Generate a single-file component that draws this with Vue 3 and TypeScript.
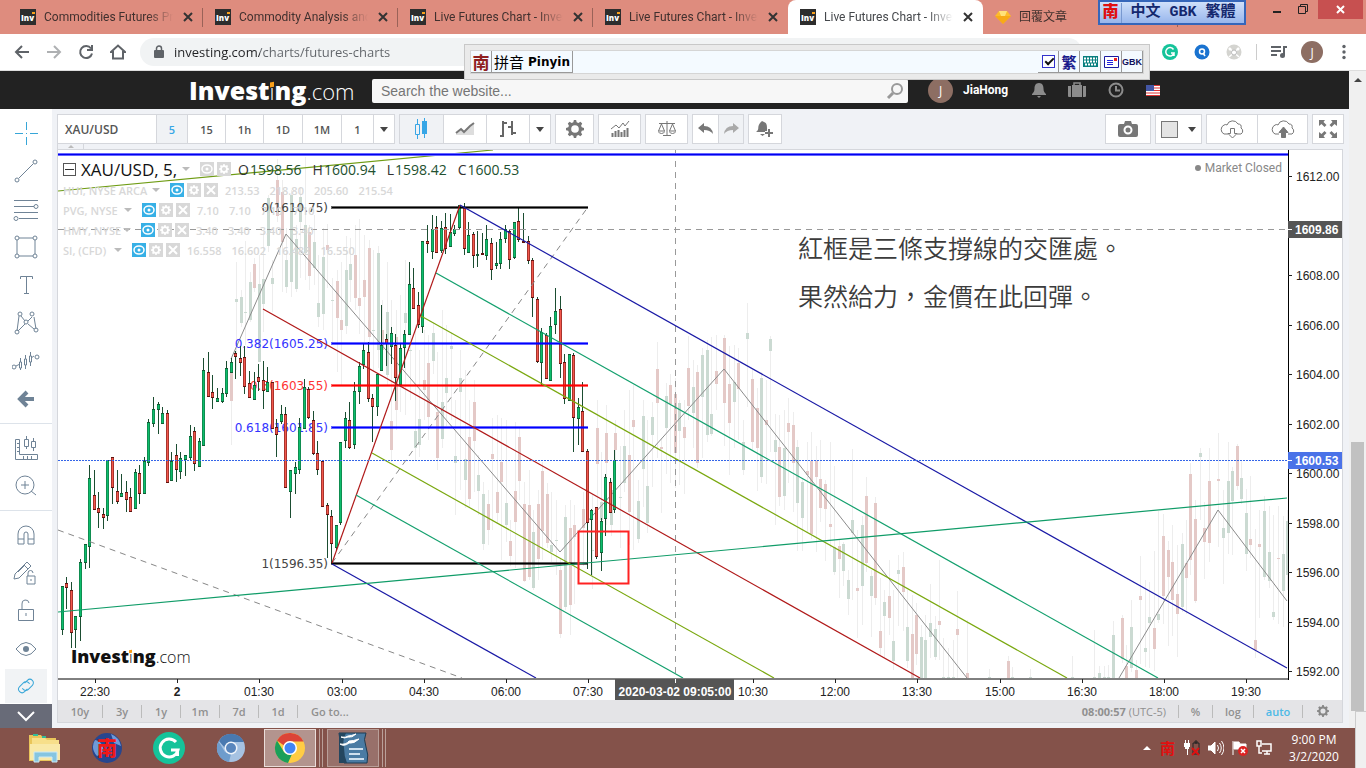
<script setup lang="ts">
type Candle = [hi: number, top: number, bottom: number, lo: number, up: 0 | 1]
type Ghost = [x: number, hi: number, top: number, bottom: number, lo: number, up: 0 | 1]

const tabs = [
  { title: 'Commodities Futures Pri', active: false },
  { title: 'Commodity Analysis and', active: false },
  { title: 'Live Futures Chart - Inves', active: false },
  { title: 'Live Futures Chart - Inves', active: false },
  { title: 'Live Futures Chart - Inves', active: true },
]

const intervals = [
  { label: '15', width: 38 },
  { label: '1h', width: 38 },
  { label: '1D', width: 39 },
  { label: '1M', width: 39 },
  { label: '1', width: 32 },
]

const indicators = [
  { name: 'HUI, NYSE ARCA', width: 85, values: ['213.53', '218.80', '205.60', '215.54'] },
  { name: 'PVG, NYSE', width: 57, values: ['7.10', '7.10', '7.10', '7.10'] },
  { name: 'HMY, NYSE', width: 56, values: ['3.40', '3.40', '3.40', '3.40'] },
  { name: 'SI, (CFD)', width: 47, values: ['16.558', '16.602', '16.488', '16.550'] },
]

const quotes = [['O', '1598.56'], ['H', '1600.94'], ['L', '1598.42'], ['C', '1600.53']]
const ranges = ['10y', '3y', '1y', '1m', '7d', '1d']

const candles: Candle[] = [
  [586,586,629,634,1],[577,583,587,608,0],[582,590,632,647,0],[616,616,629,647,1],[559,562,616,640,1],
  [544,544,562,568,1],[465,478,546,567,1],[470,495,509,509,0],[492,508,512,527,0],[508,514,517,528,0],
  [460,460,515,520,1],[457,457,487,503,0],[470,491,501,503,0],[474,493,496,496,1],[481,492,499,511,0],
  [488,497,511,511,0],[469,472,508,508,1],[465,473,493,503,0],[457,461,493,493,1],[419,422,462,465,1],
  [397,409,423,426,1],[402,404,409,433,1],[407,413,423,423,1],[410,413,482,482,0],[452,461,480,480,1],
  [444,455,469,481,0],[452,458,471,478,1],[455,455,459,475,1],[425,436,457,460,1],[427,431,463,470,0],
  [438,441,466,466,1],[358,370,445,445,1],[352,372,396,396,0],[375,392,397,408,0],[388,398,401,401,1],
  [388,393,401,402,1],[361,368,393,396,1],[358,362,372,372,1],[351,353,356,378,0],[346,358,362,375,0],
  [346,357,386,393,0],[371,383,397,397,0],[372,385,399,399,1],[364,377,381,390,0],[361,380,390,408,0],
  [367,382,391,391,1],[382,382,428,428,0],[419,427,434,456,0],[405,414,421,423,1],[407,414,487,487,0],
  [470,470,491,517,1],[462,467,473,493,1],[418,427,469,473,1],[379,387,428,428,1],[387,389,417,418,0],
  [411,420,453,454,0],[441,453,469,474,0],[461,461,506,506,0],[503,505,514,557,0],[510,516,543,563,0],
  [525,525,547,550,1],[442,442,522,524,1],[412,418,440,447,1],[402,420,447,448,0],[382,391,444,448,1],
  [362,366,391,403,1],[343,350,364,368,1],[342,352,398,401,0],[394,398,406,441,0],[374,374,406,415,1],
  [305,345,370,370,1],[334,339,343,365,0],[327,333,346,363,1],[334,345,377,400,0],[344,348,384,384,1],
  [330,334,347,367,1],[262,284,334,334,1],[268,288,308,308,0],[292,305,324,327,0],[241,241,326,332,1],
  [225,241,243,252,0],[215,229,251,258,1],[216,227,252,252,0],[221,228,250,252,1],[213,227,248,253,0],
  [214,232,246,246,1],[225,229,233,235,1],[205,205,227,229,1],[203,207,248,254,0],[222,235,252,252,1],
  [232,234,255,267,0],[231,254,255,266,1],[233,253,254,254,0],[225,239,255,259,1],[238,243,269,279,0],
  [242,263,265,268,1],[232,239,263,268,1],[225,229,238,242,1],[230,231,259,268,0],[222,222,257,258,1],
  [208,221,239,241,0],[213,241,242,242,0],[236,241,260,263,0],[258,260,297,316,0],[297,299,361,362,0],
  [328,332,362,385,1],[333,335,378,378,0],[317,326,380,380,1],[288,311,324,333,1],[296,309,363,377,0],
  [354,362,398,403,0],[354,354,400,400,1],[353,355,417,451,0],[398,407,418,444,1],[382,411,451,451,0],
  [449,451,522,568,0],[509,510,519,574,1],[507,507,556,558,0],[518,521,552,570,1],[474,477,518,535,1],
  [478,482,512,512,0],[450,460,509,512,1],
]

const ghosts: Ghost[] = [
  [231,360,368,401,445,0],[236,262,299,302,370,1],[241,290,297,323,327,1],[245,241,312,313,345,1],[250,272,282,320,322,1],
  [254,258,264,288,292,0],[259,255,284,362,362,1],[263,232,279,304,332,1],[268,195,198,246,252,1],[272,260,278,284,312,1],
  [277,159,180,216,222,0],[282,180,192,242,292,0],[286,228,260,287,293,1],[291,190,195,282,297,1],[296,225,239,289,292,1],
  [300,187,197,222,278,1],[305,157,225,253,280,1],[309,225,232,276,290,0],[314,215,242,268,285,1],[318,255,303,317,327,1],
  [323,228,257,314,330,1],[327,224,245,250,288,0],[332,278,300,301,345,1],[337,270,281,318,372,0],[341,262,320,330,386,0],
  [346,236,270,326,334,1],[350,238,264,280,302,1],[355,225,255,298,310,0],[359,219,298,306,334,0],[364,235,280,297,342,0],
  [369,240,248,337,352,0],[373,250,330,331,371,1],[378,246,253,350,368,1],[382,300,330,350,364,0],[387,262,312,375,386,1],
  [391,300,421,450,462,0],[396,310,337,410,430,0],[400,295,350,380,412,1],[405,260,313,323,415,1],[410,278,350,351,400,1],
  [415,325,431,448,460,1],[419,350,419,445,457,1],[424,330,380,390,420,0],[428,335,363,417,440,0],[433,322,333,361,374,1],
  [437,352,412,458,470,0],[442,310,402,439,448,1],[446,325,378,393,426,1],[451,332,346,349,420,1],[455,400,456,463,515,1],
  [460,350,378,392,490,1],[465,370,459,480,508,1],[469,400,437,499,508,0],[474,380,402,441,492,0],[478,455,475,491,515,1],
  [483,482,494,544,550,1],[488,490,504,530,545,0],[492,418,454,459,530,0],[497,415,492,513,523,0],[501,418,462,482,560,0],
  [506,420,503,525,542,1],[510,520,541,556,566,0],[515,422,491,522,568,0],[519,428,437,481,500,0],[524,482,504,581,582,0],
  [529,470,505,577,580,0],[533,510,532,588,590,1],[538,490,504,559,580,0],[542,462,471,531,560,0],[547,483,494,543,548,0],
  [551,492,545,552,562,1],[556,500,540,541,575,1],[560,558,570,634,638,0],[565,505,517,607,610,1],[570,500,528,605,635,0],
  [574,505,525,537,604,0],[583,492,509,528,566,0],[592,495,550,551,589,1],[597,400,428,464,545,0],[601,452,502,520,540,1],
  [606,405,433,463,525,0],[611,480,490,525,536,1],[615,420,433,450,470,0],[620,446,497,498,548,1],[624,410,446,483,492,1],
  [629,390,455,512,545,0],[633,385,420,427,550,0],[638,480,501,539,543,1],[643,400,416,469,507,1],[647,420,486,523,533,1],
  [652,402,417,435,487,1],[657,342,369,403,458,0],[661,438,447,449,513,0],[666,383,396,428,474,1],[670,374,385,404,483,0],
  [675,378,394,453,488,0],[679,400,403,431,485,1],[684,400,427,438,494,0],[688,336,368,406,420,0],[693,360,387,413,448,1],
  [697,365,372,463,468,0],[702,348,355,397,458,1],[707,340,350,435,442,1],[711,337,414,434,436,1],[716,335,371,384,410,0],
  [724,335,338,403,446,0],[729,346,384,423,475,0],[734,345,382,402,448,1],[738,348,363,389,440,0],[743,420,442,470,475,1],
  [747,303,333,339,407,1],[752,368,379,442,450,0],[757,388,408,448,491,0],[761,372,378,477,483,1],[766,380,420,425,484,0],
  [770,336,339,351,452,1],[775,414,440,452,525,1],[779,415,447,497,506,0],[784,410,448,496,510,1],[788,398,423,432,483,0],
  [793,412,425,463,512,0],[797,440,447,503,551,1],[802,478,482,518,551,1],[807,442,471,475,533,0],[811,432,461,534,539,0],
  [816,446,461,477,552,0],[820,440,479,508,522,0],[825,480,484,509,561,0],[830,442,524,527,548,0],[834,466,547,572,575,1],
  [839,540,546,559,598,0],[843,542,544,571,586,1],[848,570,580,599,615,1],[852,449,520,533,600,1],[857,530,588,591,638,0],
  [862,516,525,586,625,1],[866,477,496,563,572,0],[871,570,576,596,637,1],[875,497,503,598,605,0],[880,578,631,648,655,0],
  [884,590,602,616,658,1],[889,560,596,618,635,0],[893,590,641,661,670,1],[898,555,570,574,626,1],[903,552,567,592,631,0],
  [907,590,627,661,668,1],[912,595,634,678,678,0],[916,603,615,654,665,0],[921,625,637,678,678,1],[925,615,640,678,678,1],
  [930,584,623,637,658,1],[935,616,629,657,660,1],[939,560,621,625,660,0],[943,638,677,678,678,1],[948,648,677,678,678,1],
  [953,640,677,678,678,1],[957,591,629,635,678,0],[967,620,673,678,678,0],[989,669,677,678,678,1],[1008,656,661,678,678,0],
  [1012,667,677,678,678,1],[1030,669,677,678,678,1],[1072,656,677,678,678,1],[1094,630,677,678,678,1],[1099,666,673,678,678,1],
  [1104,666,677,678,678,1],[1108,665,677,678,678,1],[1113,621,635,678,678,1],[1122,615,618,659,663,0],[1126,645,666,678,678,0],
  [1131,600,627,668,672,1],[1136,660,670,678,678,0],[1140,556,596,600,664,0],[1145,580,648,652,667,1],[1149,582,617,623,668,1],
  [1154,551,628,649,671,0],[1158,511,614,620,623,1],[1163,514,536,596,624,0],[1168,541,550,577,646,0],[1172,525,562,600,636,0],
  [1177,545,594,614,657,0],[1182,533,544,607,612,1],[1186,520,563,578,614,0],[1190,463,474,560,575,0],[1195,500,519,601,603,0],
  [1200,448,453,457,520,1],[1204,502,528,542,579,0],[1209,448,481,543,562,0],[1218,433,479,481,547,0],[1223,490,528,538,584,1],
  [1228,442,481,533,554,1],[1232,467,471,501,555,1],[1237,444,446,486,490,0],[1241,460,478,499,504,1],[1246,489,513,554,571,1],
  [1250,476,539,545,558,0],[1255,529,640,650,658,0],[1259,510,544,547,618,0],[1264,496,511,577,580,1],[1269,506,552,581,588,1],
  [1273,515,612,617,620,1],[1278,506,558,559,624,0],[1283,516,554,591,627,1],[1287,510,521,575,590,1],
]

// Five-minute bars sit about 4.567px apart, snapped to whole pixels.
const barX = (i: number) => Math.floor(62.2 + 4.567 * i)

const trendLines = [
  { c: '#6f9c14', p: [58, 191, 493, 150] },
  { c: '#b01919', p: [332, 563, 460, 205] },
  { c: '#1a1aa6', p: [460, 205, 1287, 668] },
  { c: '#14a06e', p: [436, 273, 1158, 678] },
  { c: '#7aa80f', p: [421, 316, 1067, 678] },
  { c: '#b01919', p: [263, 309, 920, 678] },
  { c: '#7aa80f', p: [372, 453, 774, 678] },
  { c: '#14a06e', p: [356, 495, 683, 678] },
  { c: '#1a1aa6', p: [332, 564, 536, 678] },
  { c: '#109c68', p: [58, 612, 1287, 498] },
]

const fibs = [
  { y: 207, c: '#000', tc: '#444', t: '0(1610.75)' },
  { y: 343, c: '#00f', tc: '#33f', t: '0.382(1605.25)' },
  { y: 385, c: '#f00', tc: '#f33', t: '0.5(1603.55)' },
  { y: 427, c: '#00f', tc: '#33f', t: '0.618(1601.85)' },
  { y: 563, c: '#000', tc: '#444', t: '1(1596.35)' },
]

const prices = [1612, 1608, 1606, 1604, 1602, 1600, 1598, 1596, 1594, 1592]
const priceY = (p: number) => Math.round(176 + (1612 - p) * 24.75)
const times = [
  [95, '22:30'], [177, '2'], [259, '01:30'], [342, '03:00'], [424, '04:30'], [506, '06:00'], [588, '07:30'],
  [753, '10:30'], [835, '12:00'], [917, '13:30'], [1000, '15:00'], [1082, '16:30'], [1164, '18:00'], [1246, '19:30'],
] as [number, string][]

const gear = 'M7 0h2l.5 2 1.500.6L12.800 1.600l1.600 1.600-1 1.800.6 1.500 2 .5v2l-2 .5-.6 1.500 1 1.800-1.600 1.600-1.800-1-1.500.6-.5 2H7l-.5-2-1.500-.6-1.800 1-1.600-1.600 1-1.800L2 9.500 0 9V7l2-.5.6-1.500-1-1.800 1.600-1.600 1.800 1L6.500 2zM8 4.600a3.400 3.400 0 1 0 0 6.800 3.400 3.400 0 0 0 0-6.800z'

const circle = (x: number, y: number) => `M${x - 2} ${y}a2 2 0 1 0 4 0a2 2 0 1 0 -4 0`
const tools = [
  [
    { name: 'Trend line', d: `M7 21L21 7${circle(5, 23)}${circle(23, 5)}` },
    { name: 'Fibonacci', d: `M2 5.500h24M2 11.500h20M2 17.500h24M7 23.500h19${circle(24, 11.5)}${circle(4, 23.5)}` },
    { name: 'Shapes', d: `M7 5h14M7 23h14M5 7v14M23 7v14${circle(5, 5)}${circle(23, 5)}${circle(5, 23)}${circle(23, 23)}` },
    { name: 'Text', d: 'M8.500 8V5.500h12V8M14.500 5v18M12 22.500h5' },
    { name: 'Patterns', d: `M7 7L5 22M9 7l4 5M16 12l4-4M6 22l7-7M16 15l6 5M22 8l2 12${circle(8, 5)}${circle(20, 5)}${circle(14, 13)}${circle(5, 23)}${circle(24, 21)}` },
    { name: 'Prediction', d: `M4 19l4-2M22 9l-3 2${circle(2, 20)}${circle(25, 10)}M7.500 15h2v6h-2zM8.500 11v4M8.500 21v2M12.500 12h2v6h-2zM13.500 8v4M13.500 18v4M17.500 9h2v6h-2zM18.500 5v4M18.500 15v4` },
  ],
  [
    { name: 'Measure', d: 'M3.500 5.500h4v15h18v5h-22zM5 9.500h3M5 13.500h3M5 17.500h3M11.500 22v3M15.500 22v3M19.500 22v3M12.500 5.500h4v7h-4zM14.500 2v4M14.500 12v3M19.500 7.500h4v6h-4zM21.500 4v4M21.500 14v3' },
    { name: 'Zoom in', d: 'M4 13a9 9 0 1 0 18 0a9 9 0 1 0 -18 0M19 19l5 4M9 13h8M13 9v8' },
  ],
  [
    { name: 'Magnet', d: 'M6 23V13a8 8 0 0 1 16 0v10h-6V13a2 2 0 0 0-4 0v10zM6 18h6M16 18h6' },
    { name: 'Lock drawing tools', d: 'M3 15L15 3l4 4L7 19l-5 1zM12 6l4 4M6 13l7-7M15 17h8v8h-8zM16 17v-3a2.500 2.500 0 0 1 5 0M19 20v2' },
    { name: 'Unlock', d: 'M6.500 12.500h15v11h-15zM10 12V7a3.500 3.500 0 0 1 7-1M14 16v3' },
    { name: 'Hide drawings', d: 'M4 14q10-13 20 0q-10 13-20 0' },
  ],
]
</script>

<template>
  <div class="desktop">
    <header class="tabstrip">
      <nav class="tabs">
        <div v-for="(tab, i) in tabs" :key="i" class="tab" :class="{ active: tab.active, lead: i === 3 }">
          <span class="favicon">Inv<i></i></span>
          <a href="#" class="tab-title">{{ tab.title }}</a>
          <button class="tab-close" aria-label="Close tab">
            <svg width="10" height="10"><path d="M1 1l8 8M9 1l-8 8" stroke="currentColor" stroke-width="2" /></svg>
          </button>
        </div>
        <div class="tab last">
          <svg width="16" height="16"><path d="M4 2h8l4 5-8 8-8-8z" fill="#fdbb2c" /><path d="M4 2h8l-2 5H6z" fill="#ffe27a" /><path d="M0 7h16l-8 8z" fill="#f59f0a" opacity=".6" /></svg>
          <a href="#" class="tab-title">回覆文章</a>
        </div>
      </nav>
      <div class="window-buttons">
        <button aria-label="Minimize"><svg width="25" height="19"><path d="M8 12h8" stroke="#222" stroke-width="2" /></svg></button>
        <button aria-label="Restore"><svg width="28" height="19"><path d="M8.500 6.500h7v7h-7zM10.500 6V4.500h7v7H16" fill="none" stroke="#222" /></svg></button>
        <button class="win-close" aria-label="Close"><svg width="45" height="19"><path d="M19 6l7 7M26 6l-7 7" stroke="#fff" stroke-width="2" /></svg></button>
      </div>
      <div class="ime-badge"><b>南</b><span>中文 GBK 繁體</span></div>
    </header>

    <div class="addressbar">
      <button aria-label="Back"><svg width="16" height="16"><path d="M15 8H2M8 2L2 8l6 6" class="nav" /></svg></button>
      <button aria-label="Forward" class="dim"><svg width="16" height="16"><path d="M1 8h13M8 2l6 6-6 6" class="nav" /></svg></button>
      <button aria-label="Reload"><svg width="16" height="16"><path d="M13 4.500A6 6 0 1 0 14 9.500M14 1v5H9" class="nav" /></svg></button>
      <button aria-label="Home"><svg width="16" height="16"><path d="M1 8l7-6.500L15 8h-2v6.500H3V8z" class="nav" /></svg></button>
      <div class="omnibox">
        <svg width="10" height="14"><path d="M1 5h8a1 1 0 0 1 1 1v6a1 1 0 0 1-1 1H1a1 1 0 0 1-1-1V6a1 1 0 0 1 1-1z" fill="#5f6368" /><path d="M2.500 6V3.500a2.500 2.500 0 0 1 5 0V6" fill="none" stroke="#5f6368" stroke-width="1.500" /></svg>
        <input aria-label="Address" value="investing.com/charts/futures-charts" />
      </div>
      <div class="extensions">
        <svg width="16" height="16"><circle cx="8" cy="8" r="8" fill="#15c39a" /><path d="M11.500 5.500A4.200 4.200 0 1 0 12 9H9M12 9v3" fill="none" stroke="#fff" stroke-width="1.500" /></svg>
        <svg width="16" height="16"><circle cx="8" cy="8" r="7.500" fill="#1a73d0" /><circle cx="8" cy="7.500" r="2.500" fill="none" stroke="#fff" stroke-width="1.500" /><path d="M9 9l2 3" stroke="#fff" stroke-width="1.500" /></svg>
        <svg width="16" height="16"><circle cx="8" cy="8" r="7.500" fill="#d4d4d0" /><path d="M3 4l10 9M13 4L3 13" stroke="#fff" stroke-width="1.500" /><circle cx="8" cy="8.500" r="2.500" fill="#fff" stroke="#bbb" /><circle cx="4" cy="5" r="1.500" fill="#fff" /><circle cx="12" cy="5" r="1.500" fill="#fff" /></svg>
        <i class="rule"></i>
        <svg width="16" height="16" viewBox="0 0 16 14"><path d="M0 2h10M0 6h10M0 10h6M13 1v9M12.500 2H16" stroke="#5f6368" stroke-width="2" /><circle cx="11.500" cy="10.500" r="2.500" fill="#5f6368" /></svg>
        <span class="avatar">J</span>
        <svg width="4" height="16" fill="#5f6368"><circle cx="2" cy="2.500" r="1.700" /><circle cx="2" cy="8" r="1.700" /><circle cx="2" cy="13.500" r="1.700" /></svg>
      </div>
    </div>

    <div class="viewport">
      <main class="page">
        <header class="site-header">
          <a href="#" class="logo"><b>Invest<span class="dot-i">i</span>ng</b><span>.com</span></a>
          <div class="search">
            <input aria-label="Search the website" placeholder="Search the website..." />
            <svg width="18" height="18"><circle cx="11" cy="7" r="5" fill="none" stroke="#999" stroke-width="2" /><path d="M7 11l-5 5" stroke="#999" stroke-width="3" /></svg>
          </div>
          <div class="account">
            <span class="avatar">J</span>
            <a href="#" class="user">JiaHong</a>
            <svg width="14" height="16" fill="#8c8c8c"><path d="M7 1c3.500 0 4.500 3 4.500 5.500 0 3 1 4 2.500 5.500v1H0v-1c1.500-1.500 2.500-2.500 2.500-5.500C2.500 4 3.500 1 7 1zM5 14h4l-2 2z" /></svg>
            <svg width="18" height="16" fill="#8c8c8c"><path d="M4 3h10v12H4zM0 4h3v11H1a1 1 0 0 1-1-1zM15 4h3v10a1 1 0 0 1-1 1h-2z" /><path d="M6 3V1h6v2" fill="none" stroke="#8c8c8c" stroke-width="1.500" /></svg>
            <svg width="16" height="16" fill="none" stroke="#8c8c8c" stroke-width="2"><circle cx="8" cy="8" r="6.500" /><path d="M8 4v4.500h4" /></svg>
            <svg width="14" height="11"><path fill="#fff" d="M0 0h14v11H0z" /><path d="M0 .5h14M0 3h14M0 5.500h14M0 8h14M0 10.500h14" stroke="#d33" stroke-width="1.200" /><path fill="#4457a5" d="M0 0h8v6H0z" /></svg>
          </div>
        </header>

        <div class="workspace">
          <aside class="tools">
            <button class="tool" aria-label="Crosshair"><svg width="28" height="28"><path d="M14.500 3v8M14.500 18v8M3 14.500h8M18 14.500h8M14 14.500h1" style="stroke: #37a6d8" /></svg></button>
            <button v-for="t in tools[0]" :key="t.name" class="tool" :aria-label="t.name"><svg width="28" height="28"><path :d="t.d" /></svg></button>
            <button class="tool" aria-label="Back"><svg width="28" height="28"><path d="M22 14H9M15 7l-7 7 7 7" class="bold" /></svg></button>
            <i class="split"></i>
            <button v-for="t in tools[1]" :key="t.name" class="tool" :aria-label="t.name"><svg width="28" height="28"><path :d="t.d" /></svg></button>
            <i class="split"></i>
            <button v-for="t in tools[2]" :key="t.name" class="tool" :aria-label="t.name"><svg width="28" height="28"><path :d="t.d" /><circle v-if="t.name === 'Hide drawings'" cx="14" cy="14" r="3" fill="#6f8396" /></svg></button>
            <button class="tool linked" aria-label="Link"><svg width="28" height="28"><g transform="rotate(-45 14 14)"><path d="M13 17H9a3.500 3.500 0 0 1 0-7h6a3.500 3.500 0 0 1 3 5M15 11h4a3.500 3.500 0 0 1 0 7h-6a3.500 3.500 0 0 1-3-5" style="stroke: #37a6d8" /></g></svg></button>
            <button class="collapse" aria-label="Collapse"><svg width="20" height="20"><path d="M2 6l8 8 8-8" fill="none" stroke="#fff" stroke-width="2" /></svg></button>
          </aside>

          <section class="chart-panel">
            <div class="toolbar">
              <div class="group">
                <button class="symbol">XAU/USD</button>
                <button class="interval on">5</button>
                <button v-for="n in intervals" :key="n.label" class="interval" :style="{ width: n.width + 'px' }">{{ n.label }}</button>
                <button class="caret" aria-label="More intervals"><i></i></button>
              </div>
              <div class="group">
                <button class="wide on" aria-label="Candles"><svg width="16" height="22"><path d="M3.500 1v5M3.500 16v5M1.500 6.500h4v10h-4z" fill="none" stroke="#37a6e6" /><path d="M10 0h1v3h2v13h-2v4h-1v-4H8V3h2z" fill="#37a6e6" /></svg></button>
                <button class="wide" aria-label="Area"><svg width="20" height="16"><path d="M1 12l5-4 3 3 6-6 4-3v12H1z" fill="#ddd" /><path d="M1 12l5-4 3 3 6-6 4-3" fill="none" stroke="#777" stroke-width="2" /></svg></button>
                <button class="wide" aria-label="Bars"><svg width="18" height="20" fill="none" stroke="#666" stroke-width="2"><path d="M4 2v16M1 17h3M4 4h4M13 2v14M9 8h4M13 14h4" /></svg></button>
                <button class="caret" aria-label="More styles"><i></i></button>
              </div>
              <div class="group"><button class="mid" aria-label="Settings"><svg width="18" height="18" viewBox="0 0 16 16"><path :d="gear" fill="#777" fill-rule="evenodd" /></svg></button></div>
              <div class="group"><button class="solo" aria-label="Indicators"><svg width="20" height="18" stroke="#777"><path d="M2.500 17v-4M5.500 17v-6M8.500 17v-7M11.500 17v-5M14.500 17v-7M17.500 17V8" stroke-width="2" /><path d="M1 9l5-4 3 3 4-5 2 3 4-5" fill="none" /></svg></button></div>
              <div class="group"><button class="solo" aria-label="Compare"><svg width="20" height="18" fill="none" stroke="#777"><path d="M2 3.500h16M10 1v14M6 15.500h8M4.500 4L1.500 11h6zM15.500 4l-3 7h6zM1 11.500q3.500 4 7 0M12 11.500q3.500 4 7 0" /></svg></button></div>
              <div class="group">
                <button class="narrow" aria-label="Undo"><svg width="16" height="12"><path d="M6 0v3q8 0 9 8-3-4-9-4v3L0 5z" fill="#777" /></svg></button>
                <button class="narrow off" aria-label="Redo"><svg width="16" height="12"><path d="M10 0v3q-8 0-9 8 3-4 9-4v3l6-5z" fill="#aaa" /></svg></button>
              </div>
              <div class="group"><button class="alert" aria-label="Add alert"><svg width="20" height="18"><path d="M7 1l2 1c3 1 3 4 3 6 0 3 1 3 2 4H1c3-2 2-4 2.500-6S5 3 7 1zM5 14h5l-2.500 2z" fill="#777" /><path d="M14 9v8M10 13h8" stroke="#fff" stroke-width="4" /><path d="M14 9v8M10 13h8" stroke="#777" stroke-width="2" /></svg></button></div>
              <div class="group push"><button class="snap" aria-label="Snapshot"><svg width="20" height="16"><path d="M2 3h4l1-3h6l1 3h4a2 2 0 0 1 2 2v9a2 2 0 0 1-2 2H2a2 2 0 0 1-2-2V5a2 2 0 0 1 2-2z" fill="#777" /><circle cx="10" cy="9" r="3.500" fill="none" stroke="#fff" stroke-width="2" /></svg></button></div>
              <div class="group"><button class="swatch" aria-label="Background"><b></b><i></i></button></div>
              <div class="group">
                <button class="cloud" aria-label="Load"><svg width="28" height="20" fill="none" stroke="#777"><path d="M10 15H6a5 5 0 0 1 0-9q2-1 3 0a6 6 0 0 1 11-1q4 0 3 4a3.500 3.500 0 0 1 0 6h-4M12.500 9.500h4v5h2.500l-4.500 4.500-4.500-4.500h2.500z" /></svg></button>
                <button class="cloud" aria-label="Save"><svg width="28" height="20" fill="none" stroke="#777"><path d="M10 15H6a5 5 0 0 1 0-9q2-1 3 0a6 6 0 0 1 11-1q4 0 3 4a3.500 3.500 0 0 1 0 6h-4" /><path d="M12.500 18.500v-5H10L14.500 8l4.500 5.500h-2.500v5z" fill="#777" /></svg></button>
              </div>
              <div class="group"><button class="full" aria-label="Full screen"><svg width="18" height="18" fill="#777"><path d="M0 0h6L4.500 2l3 3-2 2-3-3L0 6zM18 0v6l-2.500-2-3 3-2-2 3-3L12 0zM18 18h-6l1.500-2-3-3 2-2 3 3 2.500-2zM0 18v-6l2.500 2 3-3 2 2-3 3L6 18z" /></svg></button></div>
            </div>
            <div class="drawer"><button aria-label="Hide toolbar"><i></i></button></div>

            <div class="chart">
              <svg class="plot" role="img" aria-label="XAU/USD five minute candlestick chart">
                <defs><clipPath id="pane"><rect x="58" y="150" width="1230" height="528" /></clipPath></defs>
                <g transform="translate(-58 -150)">
                  <g clip-path="url(#pane)">
                    <g>
                      <template v-for="g in ghosts" :key="g[0]">
                        <rect :x="g[0]" :y="g[1]" width="1" :height="g[4] - g[1]" fill="#ededed" />
                        <rect :x="g[0] - 1" :y="g[2]" :width="3" :height="g[3] - g[2]" :fill="g[5] ? '#cbdad2' : '#e4c9c7'" />
                      </template>
                    </g>
                    <path d="M231 359L286 234L560 552L724 369L967 678M1119 678L1218 510L1287 601" fill="none" stroke="#8b8b8b" />
                    <g v-for="f in fibs" :key="f.y">
                      <text x="328" :y="f.y + 5" text-anchor="end" class="fib" :fill="f.tc">{{ f.t }}</text>
                    </g>
                    <g v-for="(c, i) in candles" :key="i">
                      <rect :x="barX(i)" :y="c[0]" width="1" :height="c[3] - c[0] + 1" fill="#1b4d31" />
                      <rect :x="barX(i) - 1" :y="c[1]" width="3" :height="c[2] - c[1] + 1" :fill="c[4] ? '#135c35' : '#5e130f'" />
                      <rect v-if="c[2] - c[1] > 1" :x="barX(i) - 0.5" :y="c[1] + 1" width="2" :height="c[2] - c[1] - 1" :fill="c[4] ? '#0dbd6d' : '#f2574c'" />
                    </g>
                    <path d="M332 563L588 207M58 530L462 678" fill="none" stroke="#888" stroke-dasharray="6 5" />
                    <path d="M58 229.500H1288M675.500 150V678" fill="none" stroke="#999" stroke-dasharray="6 5" />
                    <g v-for="f in fibs" :key="f.t">
                      <rect x="331" :y="f.y - 1" width="257" height="3" :fill="f.c" opacity=".6" />
                      <rect x="332" :y="f.y" width="256" height="1" :fill="f.c" />
                    </g>
                    <path v-for="(l, i) in trendLines" :key="i" :d="`M${l.p[0]} ${l.p[1]}L${l.p[2]} ${l.p[3]}`" :stroke="l.c" stroke-width="1.200" />
                    <rect x="58" y="153" width="1230" height="3" fill="#6666ff" />
                    <rect x="58" y="154" width="1230" height="1" fill="#00e" />
                    <path d="M58 460.500H1288" stroke="#3465e8" stroke-dasharray="2 1" />
                    <rect x="578.500" y="531.500" width="50" height="52" fill="none" stroke="#f22" stroke-width="2" />
                    <text x="798" y="258" class="note">紅框是三條支撐線的交匯處。</text>
                    <text x="798" y="306" class="note">果然給力，金價在此回彈。</text>
                  </g>
                  <path d="M58 679H1289M1288.500 150V680" stroke="#000" fill="none" />
                  <g class="axis">
                    <g v-for="p in prices" :key="p">
                      <rect x="1288" :y="priceY(p)" width="4" height="1" />
                      <text x="1296" :y="priceY(p) + 5">{{ p.toFixed(2) }}</text>
                    </g>
                    <g v-for="t in times" :key="t[1]">
                      <rect :x="t[0]" y="679" width="1" height="4" />
                      <text :x="t[0]" y="696" text-anchor="middle" :font-weight="t[1] === '2' ? 700 : 400">{{ t[1] }}</text>
                    </g>
                  </g>
                  <g class="tag">
                    <rect x="1288" y="221" width="55" height="17" fill="#555" /><rect x="1288" y="229" width="4" height="1" /><text x="1295" y="234">1609.86</text>
                    <rect x="1288" y="452" width="55" height="17" fill="#4a72e8" /><rect x="1288" y="460" width="4" height="1" /><text x="1295" y="465">1600.53</text>
                    <rect x="615" y="679" width="119" height="21" fill="#555" /><rect x="675" y="679" width="1" height="4" /><text x="675" y="696" text-anchor="middle">2020-03-02 09:05:00</text>
                  </g>
                </g>
              </svg>
              <div class="legend">
                <div class="main-row">
                  <button class="fold" aria-label="Collapse legend"></button>
                  <strong>XAU/USD, 5,</strong>
                  <i class="tri"></i>
                  <button class="chip" aria-label="Show"><svg width="12" height="10"><ellipse cx="6" cy="5" rx="5" ry="4" fill="none" stroke="#fff" stroke-width="1.500" /><circle cx="6" cy="5" r="1.500" fill="#fff" /></svg></button>
                  <button class="chip" aria-label="Format"><svg width="10" height="10" viewBox="0 0 16 16"><path :d="gear" fill="#fff" fill-rule="evenodd" /></svg></button>
                  <span v-for="q in quotes" :key="q[0]" class="quote">{{ q[0] }}<em>{{ q[1] }}</em></span>
                </div>
                <div v-for="r in indicators" :key="r.name" class="sub-row">
                  <span class="name" :style="{ width: r.width + 'px' }">{{ r.name }}</span>
                  <i class="tri"></i>
                  <button class="chip blue" aria-label="Show"><svg width="12" height="10"><ellipse cx="6" cy="5" rx="5" ry="4" fill="none" stroke="#fff" stroke-width="1.500" /><circle cx="6" cy="5" r="1.500" fill="#fff" /></svg></button>
                  <button class="chip" aria-label="Format"><svg width="10" height="10" viewBox="0 0 16 16"><path :d="gear" fill="#fff" fill-rule="evenodd" /></svg></button>
                  <button class="chip" aria-label="Remove"><svg width="10" height="10"><path d="M1 1l8 8M9 1l-8 8" stroke="#fff" stroke-width="2" /></svg></button>
                  <span v-for="(v, k) in r.values" :key="k" class="value">{{ v }}</span>
                </div>
              </div>
              <div class="status"><i></i>Market Closed</div>
              <div class="watermark logo"><b>Invest<span class="dot-i">i</span>ng</b><span>.com</span></div>
            </div>

            <footer class="rangebar">
              <button v-for="r in ranges" :key="r" class="range">{{ r }}</button>
              <button class="goto">Go to...</button>
              <span class="clock"><b>08:00:57</b> (UTC-5)</span>
              <button class="opt">%</button>
              <button class="opt log">log</button>
              <button class="opt auto">auto</button>
              <button class="opt cog" aria-label="Scale settings"><svg width="12" height="12" viewBox="0 0 16 16"><path :d="gear" fill="#888" fill-rule="evenodd" /></svg></button>
            </footer>
          </section>
        </div>
      </main>
      <div class="scrollbar"><i class="up"></i><div class="thumb"></div></div>
    </div>

    <div class="ime">
      <div class="ime-inner">
        <b class="nan">南</b><span class="mode">拼音 <b>Pinyin</b></span>
        <label class="key push"><input type="checkbox" checked aria-label="Enabled" /></label>
        <button class="key fan">繁</button>
        <button class="key" aria-label="Keyboard"><svg width="15" height="11"><path fill="#087f80" d="M0 0h15v11H0z" /><path d="M1 2.500h13M1 5.500h13M2 8.500h11" stroke="#fff" stroke-width="2" stroke-dasharray="2 1" /></svg></button>
        <button class="key" aria-label="Mail"><svg width="15" height="12"><path d="M.5.500h14v11H.5z" fill="#fff" stroke="#1a1aa0" /><path d="M3 4.500h6M3 6.500h6M3 8.500h6" stroke="#22d" /><path fill="#e22" d="M10 2h3v3h-3z" /></svg></button>
        <button class="key gbk">GBK</button>
      </div>
    </div>

    <footer class="taskbar">
      <button class="task" aria-label="File Explorer"><svg width="32" height="32"><path d="M0 3h12l2 3h13v23H0z" fill="#e9c55a" /><path d="M3 6h13l2 2h12v20H3z" fill="#f7df8a" /><path d="M1 12h30v16H1z" fill="#f9e9a8" /><path d="M4 2h5v2H4zM13 4h4v2h-4z" fill="#3b9" /><path d="M5 20h23v10h-5v-5H10v5H5z" fill="#86c5e0" stroke="#cdeaf5" /></svg></button>
      <button class="task" aria-label="NJStar"><svg width="32" height="32"><circle cx="16" cy="16" r="15" fill="#27468f" /><path d="M4 8q6 1 8 7t-6 9q-7-8-2-16zM20 2q8 3 10 12l-7-3z" fill="#6f9ad8" /><text x="16" y="24" text-anchor="middle" class="nj">南</text></svg></button>
      <button class="task" aria-label="Grammarly"><svg width="32" height="32"><circle cx="16" cy="16" r="16" fill="#15c39a" /><path d="M23 10A9 9 0 1 0 25 18H18M24.500 18v6" fill="none" stroke="#fff" stroke-width="3" /></svg></button>
      <button class="task" aria-label="Chromium"><svg width="32" height="32"><circle cx="16" cy="16" r="14" fill="#a6c2e2" /><path d="M4 9A14 14 0 0 1 29 10H16a6 6 0 0 0-6 6z" fill="#4979b0" /><path d="M3.500 9.500L10 20l6 2-2 8A14 14 0 0 1 3.500 9.500z" fill="#6e9ccc" /><circle cx="16" cy="16" r="6.500" fill="#f0f4fa" /><circle cx="16" cy="16" r="5" fill="#5986bd" /></svg></button>
      <button class="task running front" aria-label="Chrome"><svg width="32" height="32"><circle cx="16" cy="16" r="15" fill="#fc4" /><path d="M3 8.500A15 15 0 0 1 29.500 9.500H16a6.500 6.500 0 0 0-6 4z" fill="#dc4437" /><path d="M3 8.500L10 20q3 4 8 2l-4 9A15 15 0 0 1 3 8.500z" fill="#1a9f5a" /><circle cx="16" cy="16" r="7" fill="#fff" /><circle cx="16" cy="16" r="5.500" fill="#4285f4" /></svg></button>
      <button class="task running" aria-label="OpenOffice"><svg width="32" height="32"><path d="M2 1h27q-3 6 0 14 3 8 1 16H7q-3-6-3-14z" fill="#4a7ba3" stroke="#1c3c54" /><path d="M2 1h7q-4 8-2 15 0 8 3 15H2z" fill="#24465f" /><path d="M4 5q5 1 7-1 3 0 8-2-4 4-8 3-4 2-7 0zM3 12q6 1 9-3 4 0 10-2-5 5-10 4-5 4-9 1z" fill="#fff" stroke="#fff" /><path d="M12 17h14M12 22h11M12 27h15" stroke="#cfe0ee" stroke-width="2" /></svg></button>
      <div class="tray">
        <svg width="10" height="6"><path d="M1 5l4-4 4 4z" fill="#fff" /></svg>
        <b>南</b>
        <svg width="16" height="16"><path d="M0 3h6v4H5v2H4v6H3V9H1V7H0zM1 0h1v3H1zM4 0h1v3H4z" fill="#fff" /><path d="M9 3h6v11H9zM11 1h2v2h-2z" fill="none" stroke="#222" /><path d="M8 8l7 7M15 8l-7 7" stroke="#d11" stroke-width="2" /></svg>
        <svg width="16" height="16" fill="none" stroke="#fff"><path d="M0 6h3l4-4v12l-4-4H0z" fill="#fff" /><path d="M9.500 5q2 3 0 6M11.500 3q3.500 5 0 10M13.500 1q5 7 0 14" /></svg>
        <svg width="16" height="16"><path d="M1 1v14M2 2h5l1 2h6v7H8L7 9H2z" fill="#fff" stroke="#fff" /><circle cx="11" cy="11" r="5" fill="#d22" /><path d="M9 9l4 4M13 9l-4 4" stroke="#fff" stroke-width="1.500" /></svg>
        <svg width="16" height="16" fill="none" stroke="#fff" stroke-width="1.500"><path d="M1 1h4v5H1zM3 6v7h3M6 4h9v7H6M8 14h6M11 11v3" /></svg>
      </div>
      <time>9:00 PM<br />3/2/2020</time>
      <i class="corner"></i>
    </footer>
  </div>
</template>

<style scoped>
.desktop { position: relative; display: flex; flex-direction: column; min-height: 100vh; overflow: hidden; font-family: "Open Sans", "Noto Sans CJK TC", sans-serif; background: #fff; }
* { box-sizing: border-box; }
button { display: flex; align-items: center; justify-content: center; padding: 0; border: 0; background: none; font: inherit; color: inherit; flex: none; }
a { color: inherit; text-decoration: none; }
svg { flex: none; display: block; }

.tabstrip { position: relative; display: flex; justify-content: space-between; height: 34px; background: #de8c7e; }
.tabs { display: flex; padding-left: 8px; }
.tab { position: relative; display: flex; align-items: center; width: 195px; padding: 0 8px 0 12px; gap: 8px; font: 12px Roboto, "Noto Sans CJK TC", sans-serif; color: #40302e; }
.tab:not(.active):not(.lead)::after { content: ""; position: absolute; right: 0; top: 8px; width: 1px; height: 19px; background: #9a6258; }
.tab.active { background: #fff; border-radius: 8px 8px 0 0; color: #45484c; }
.tab-title { flex: 1; overflow: hidden; white-space: nowrap; line-height: 20px; mask-image: linear-gradient(90deg, #000 80%, transparent); }
.tab-close { width: 14px; height: 16px; color: #333; }
.favicon { position: relative; display: flex; align-items: center; width: 16px; height: 16px; padding-left: 1px; background: #2d2d2d; color: #fff; font: 800 8px "Open Sans", sans-serif; }
.favicon i { position: absolute; right: 1px; top: 3px; width: 3px; height: 2px; background: #f9a01b; }
.window-buttons { display: flex; align-items: flex-start; padding-right: 3px; }
.win-close { background: #c75050; }
.ime-badge { position: absolute; right: 120px; top: 0; display: flex; align-items: center; height: 25px; width: 148px; border: 2px solid #3566ba; background: linear-gradient(#cfe0fa, #98b6ec); color: #14286e; font: 700 15px "Liberation Mono", "Noto Sans CJK TC", monospace; }
.ime-badge b { width: 22px; text-align: center; color: #e01010; font-weight: 900; font-size: 16px; border-right: 1px solid #7898d0; line-height: 20px; }
.ime-badge span { flex: 1; text-align: center; white-space: nowrap; line-height: 20px; }

.addressbar { display: flex; align-items: center; height: 37px; padding: 0 20px 0 6px; background: #fff; border-bottom: 1px solid #ddd; }
.addressbar > button { width: 32px; }
.nav { fill: none; stroke: #5f6368; stroke-width: 2; }
.dim { opacity: .5; }
.omnibox { flex: 1; display: flex; align-items: center; gap: 10px; height: 28px; margin-left: 6px; padding: 0 14px; border-radius: 14px; background: #f1f3f4; }
.omnibox input { flex: 1; padding: 0; border: 0; outline: 0; font: 13px "Open Sans", sans-serif; color: transparent; background: linear-gradient(90deg, #202124 86px, #5f6368 86px); -webkit-background-clip: text; background-clip: text; }
.extensions { display: flex; align-items: center; gap: 16px; margin-left: 80px; }
.rule { width: 1px; height: 16px; margin: 0 -2px; background: #ccc; }
.avatar { display: flex; align-items: center; justify-content: center; width: 22px; height: 22px; border-radius: 50%; background: #8d6e63; color: #fff; font-size: 12px; flex: none; }
.extensions .avatar { margin: 0 3px 0 -2px; }

.viewport { flex: 1; display: flex; }
.page { flex: 1; min-width: 0; display: flex; flex-direction: column; }
.site-header { display: flex; align-items: center; height: 38px; padding-left: 189px; background: #222; color: #fff; }
.logo { display: flex; align-items: baseline; font-family: "Open Sans", sans-serif; white-space: nowrap; }
.logo b { font-weight: 800; }
.dot-i { position: relative; }
.dot-i::after { content: ""; position: absolute; left: 5%; top: 20%; width: 90%; height: 15%; background: #f9a01b; transform: skewY(-12deg); }
.site-header .logo { width: 183px; font-size: 25px; line-height: 34px; }
.site-header .logo span:last-child { font-size: 22px; font-weight: 300; }
.search { flex: 1; display: flex; align-items: center; height: 24px; margin-top: 1px; padding: 0 4px 0 9px; border-radius: 2px; background: #f7f7f7; }
.search input { flex: 1; border: 0; padding: 0; outline: 0; background: none; font: 14px "Liberation Sans", sans-serif; }
.account { display: flex; align-items: center; width: 441px; padding-left: 20px; }
.account .avatar { width: 25px; height: 25px; margin-right: 10px; }
.user { width: 69px; font: 700 12px Roboto, sans-serif; }
.account svg { margin-right: 22px; }

.workspace { flex: 1; display: flex; background: #f0f2f6; }
.tools { display: flex; flex-direction: column; width: 52px; padding-top: 5px; background: #fff; }
.tool { height: 38px; }
.tool path { fill: none; stroke: #6f8396; }
.tool path.bold { stroke-width: 4; }
.split { height: 1px; margin: 5px 0; background: #dde3ea; }
.linked { height: 34px; margin: 1px 5px 0; background: #f1f3f5; }
.collapse { height: 24px; margin-top: auto; background: #686b78; }

.chart-panel { flex: 1; min-width: 0; display: flex; flex-direction: column; padding: 5px 6px 5px 5px; }
.toolbar { display: flex; gap: 4px; height: 30px; margin-right: -1px; }
.group { display: flex; border: 1px solid #d5d7dc; background: #fff; }
.group button { color: #555; font-weight: 600; font-size: 12px; }
.group button + button { border-left: 1px solid #d5d7dc; }
.push { margin-left: auto; }
.group .symbol { width: 98px; justify-content: flex-start; padding-left: 7px; font-size: 12px; }
.group .interval.on { width: 31px; color: #37a6e6; }
.group .interval { font-size: 11px; }
.group .on, .group .off { background: #f0f2f5; }
.group .caret { width: 21px; }
.caret i, .swatch i { border: 4px solid transparent; border-top: 5px solid #444; border-bottom: 0; }
.wide { width: 43px; }
.solo { width: 41px; }
.mid { width: 37px; }
.narrow { width: 25px; }
.alert { width: 32px; }
.snap { width: 44px; }
.swatch { width: 45px; gap: 10px; }
.swatch b { width: 17px; height: 17px; border: 1px solid #777; background: #e4e4e4; }
.cloud { width: 50px; }
.full { width: 30px; }
.drawer { display: flex; height: 6px; border-bottom: 1px solid #d5d7dc; border-left: 1px solid #d5d7dc; }
.drawer button { width: 26px; border-right: 1px solid #d5d7dc; }
.drawer i { border: 3px solid transparent; border-bottom: 3px solid #bbb; border-top: 0; }

.chart { position: relative; flex: 1; border: solid #d5d7dc; border-width: 0 1px; background: #fff; }
.plot { position: absolute; inset: 0; width: 100%; height: 100%; }
.fib { font: 12px "DejaVu Sans", sans-serif; }
.note { font: 25px "Noto Sans CJK TC", sans-serif; font-weight: 350; fill: #3c3c3c; }
.axis { font: 12px "Liberation Sans", sans-serif; fill: #222; }
.tag { font: 700 12px "Liberation Sans", sans-serif; fill: #fff; }
.legend { position: absolute; left: 5px; top: 9px; }
.main-row, .sub-row { display: flex; align-items: center; height: 20px; }
.main-row { margin-bottom: 1px; white-space: nowrap; }
.fold { width: 13px; height: 13px; border: 1px solid #555; }
.fold::after { content: ""; width: 9px; height: 1px; background: #333; }
.main-row strong { width: 98px; margin-left: 5px; font-weight: 400; font-size: 17px; color: #111; }
.tri { border: 4px solid transparent; border-top: 4px solid #bbb; border-bottom: 0; margin: 0 10px 0 3px; }
.chip { width: 14px; height: 14px; margin-right: 3px; background: #d8d8d8; }
.blue { background: #37b0e6; }
.quote { margin-left: 4px; font-size: 14px; color: #333; }
.quote em { margin-left: 1px; font-style: normal; color: #22502f; }
.quote + .quote { margin-left: 11px; }
.sub-row { font-size: 11px; font-weight: 600; color: #d8d8d8; }
.name { white-space: nowrap; }
.sub-row .tri { margin: 0 10px 0 4px; }
.value { margin-left: 4px; margin-right: 6px; }
.status { position: absolute; right: 60px; top: 9px; display: flex; align-items: center; gap: 4px; font: 12px Roboto, sans-serif; line-height: 18px; color: #888; }
.status i { width: 6px; height: 6px; border-radius: 50%; background: #888; }
.watermark { position: absolute; left: 13px; bottom: 32px; font-size: 18px; color: #111; }
.watermark span:last-child { font-size: 16px; font-weight: 300; }

.rangebar { display: flex; align-items: center; height: 23px; border: 1px solid #d5d7dc; border-top: 0; background: #e4e4e7; font-size: 11px; font-weight: 600; color: #909090; }
.range { width: 39px; height: 13px; border-right: 1px solid #bbb; }
.range:first-child { width: 45px; }
.goto { margin-left: 13px; }
.clock { margin-left: auto; padding-right: 12px; font-weight: 400; }
.opt { width: 34px; height: 13px; border-left: 1px solid #bbb; }
.log { width: 41px; }
.auto { width: 49px; color: #4db9e6; }
.cog { width: 40px; }

.scrollbar { display: flex; flex-direction: column; align-items: center; width: 17px; background: #f0f0f0; }
.up { margin-top: 7px; border: 4px solid transparent; border-bottom: 4px solid #444; border-top: 0; }
.thumb { width: 13px; height: 269px; margin-top: auto; margin-bottom: 17px; background: #c1c1c1; }

.ime { position: absolute; left: 464px; right: 216px; top: 44px; height: 36px; padding: 5px; border: 1px solid #c8c8c8; background: #eaeaea; }
.ime-inner { display: flex; height: 24px; border: 1px solid #d5d5d5; background: #f4faff; }
.nan, .mode, .key { display: flex; align-items: center; justify-content: center; border: solid #999; border-width: 0 1px 1px 0; }
.nan { width: 21px; font-size: 17px; color: #8f2020; }
.mode { gap: 4px; padding: 0 2px; font: 15px "Noto Sans CJK TC", sans-serif; line-height: 16px; color: #000; }
.mode b { font: 700 12px "DejaVu Sans", sans-serif; }
.key { width: 21px; background: #f4faff; }
.key input { width: 13px; height: 13px; margin: 0; appearance: none; border: 1px solid #33c; background: #fff; }
.key input:checked::after { content: ""; display: block; width: 7px; height: 3px; margin: 2px; border: solid #111; border-width: 0 0 2px 2px; transform: rotate(-45deg); }
.fan { font-weight: 700; font-size: 15px; color: #1a1a8c; }
.gbk { font: 700 9px "Liberation Sans", sans-serif; color: #10105c; }

.taskbar { position: relative; display: flex; align-items: center; height: 40px; padding-left: 14px; background: #84524a; color: #fff; }
.task { width: 62px; height: 40px; }
.running { width: 52px; height: 38px; margin-left: 2px; margin-right: 9px; border: 1px solid #b99f99; background: #98706a; box-shadow: 3px 0 0 #84524a, 4px 0 0 #b99f99, 6px 0 0 #84524a, 7px 0 0 #b99f99; }
.front { background: #b3948e; border-color: #eaddda; }
.nj { font: 900 20px "Noto Sans CJK TC", sans-serif; fill: #f01818; }
.tray { display: flex; align-items: center; gap: 8px; margin-left: auto; }
.tray b { width: 16px; font-size: 15px; line-height: 16px; color: #e01010; }
time { width: 84px; text-align: center; font-size: 12px; line-height: 17px; }
.corner { width: 10px; }
.corner::after { content: ""; position: absolute; right: 0; bottom: 0; width: 10px; height: 56px; border: solid #ccc; border-width: 1px 0 0 1px; background: #f0f0f0; }
</style>

<style>
body { margin: 0; }
</style>
